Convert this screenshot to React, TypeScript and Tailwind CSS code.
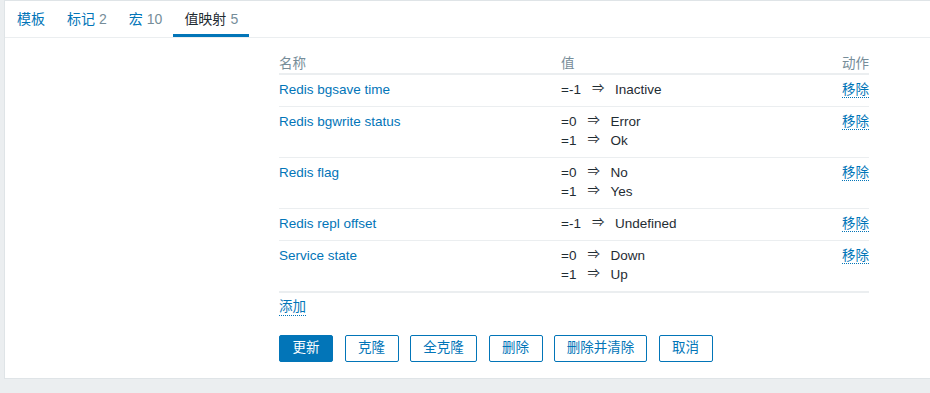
import React from "react";

const font = { fontFamily: '"Liberation Sans", Arial, "Noto Sans CJK SC", sans-serif' };

type Row = { name: string; values: [string, string][] };

const rows: Row[] = [
  { name: "Redis bgsave time", values: [["=-1", "Inactive"]] },
  { name: "Redis bgwrite status", values: [["=0", "Error"], ["=1", "Ok"]] },
  { name: "Redis flag", values: [["=0", "No"], ["=1", "Yes"]] },
  { name: "Redis repl offset", values: [["=-1", "Undefined"]] },
  { name: "Service state", values: [["=0", "Down"], ["=1", "Up"]] },
];

function Tab({ label, count, active }: { label: string; count?: string; active?: boolean }) {
  return (
    <div
      className={
        "h-[36px] px-[11px] pt-[3px] flex items-center text-[14px] border-b-[3px] " +
        (active ? "border-[#0275b8]" : "border-transparent")
      }
    >
      <span className={active ? "text-[#1f2c33]" : "text-[#0275b8]"}>{label}</span>
      {count && <span className="text-[#768d99] ml-[4px]">{count}</span>}
    </div>
  );
}

export default function App() {
  return (
    <div className="w-[930px] h-[393px] overflow-hidden bg-[#ebeef0]" style={font}>
      <div className="ml-[4px] w-[960px] bg-white border border-[#dfe4e7]">
        <div className="flex pl-[1px] border-b border-[#ebeef0]">
          <Tab label="模板" />
          <Tab label="标记" count="2" />
          <Tab label="宏" count="10" />
          <Tab label="值映射" count="5" active />
        </div>
        <div className="ml-[274px] w-[590px] mt-[16px] pb-[16px] text-[13.5px] text-[#1f2c33]">
          <div className="flex h-[19px] leading-[19px] text-[#768d99] border-b-2 border-[#ebeef0] box-content">
            <div className="w-[282px]">名称</div>
            <div className="flex-1">值</div>
            <div>动作</div>
          </div>
          {rows.map((r, i) => (
            <div
              key={r.name}
              className={
                "flex pt-[5px] pb-[7px] leading-[19px] border-[#ebeef0] " +
                (i === rows.length - 1 ? "border-b-2" : "border-b")
              }
            >
              <div className="w-[282px] text-[#0275b8]">{r.name}</div>
              <div className="flex-1">
                {r.values.map(([k, v]) => (
                  <div key={k} className="flex items-center">
                    <span>{k}</span>
                    <span className="ml-[11px] w-[11px] text-[12.5px] text-center inline-block">⇒</span>
                    <span className="ml-[12px]">{v}</span>
                  </div>
                ))}
              </div>
              <div>
                <span className="text-[#0275b8] border-b border-dotted border-[#0275b8]">移除</span>
              </div>
            </div>
          ))}
          <div className="mt-[6px] flex">
            <span className="leading-[16px] text-[#0275b8] border-b border-dotted border-[#0275b8]">添加</span>
          </div>
          <div className="mt-[19px] flex gap-[11.5px]">
            <button className="w-[54px] h-[27px] rounded-[2px] bg-[#0275b8] text-white border border-[#0275b8]">更新</button>
            <button className="w-[54px] h-[27px] rounded-[2px] bg-white text-[#0275b8] border border-[#0275b8]">克隆</button>
            <button className="w-[67px] h-[27px] rounded-[2px] bg-white text-[#0275b8] border border-[#0275b8]">全克隆</button>
            <button className="w-[54px] h-[27px] rounded-[2px] bg-white text-[#0275b8] border border-[#0275b8]">删除</button>
            <button className="w-[93px] h-[27px] rounded-[2px] bg-white text-[#0275b8] border border-[#0275b8]">删除并清除</button>
            <button className="w-[54px] h-[27px] rounded-[2px] bg-white text-[#0275b8] border border-[#0275b8]">取消</button>
          </div>
        </div>
      </div>
    </div>
  );
}
